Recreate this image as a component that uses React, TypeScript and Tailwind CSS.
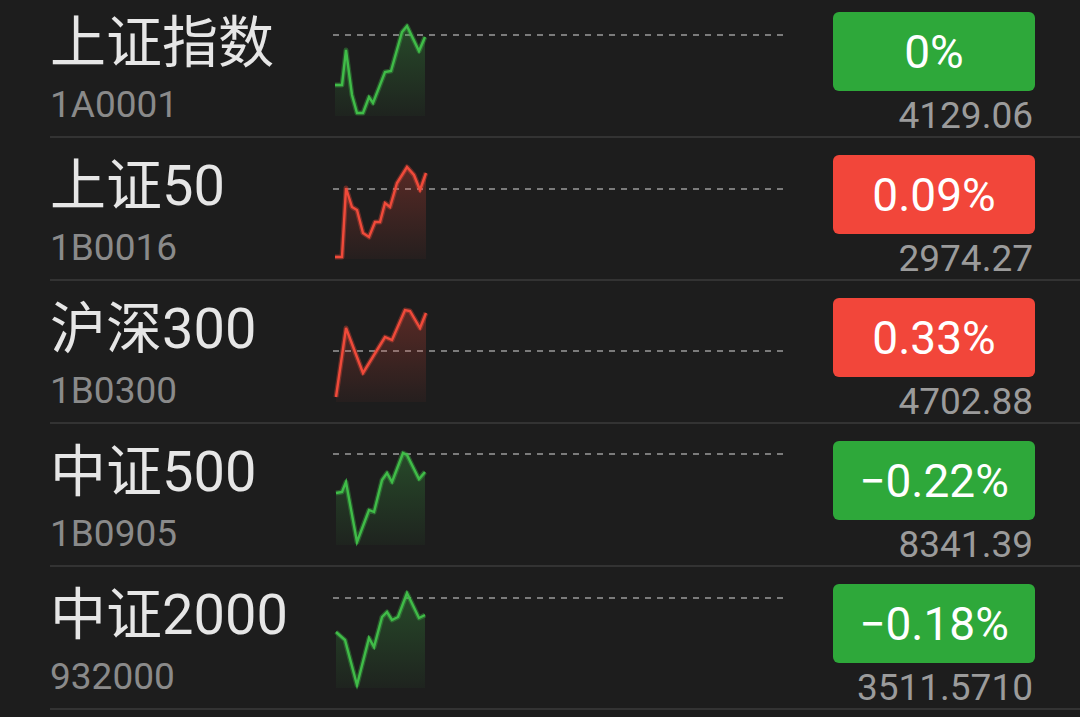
import React from "react";

type Row = {
  name: string;
  code: string;
  pct: string;
  price: string;
  up: boolean;
  pts: [number, number][];
  dash: number;
};

const rows: Row[] = [
  {
    name: "上证指数",
    code: "1A0001",
    pct: "0%",
    price: "4129.06",
    up: false,
    dash: 40,
    pts: [[5,90],[12,90],[16,55],[22,100],[27,118],[33,118],[39,102],[43,108],[55,77],[61,76],[72,37],[77,31],[89,56],[95,42]],
  },
  {
    name: "上证50",
    code: "1B0016",
    pct: "0.09%",
    price: "2974.27",
    up: true,
    dash: 51,
    pts: [[5,119],[12,119],[16,50],[22,69],[27,72],[33,95],[39,99],[45,84],[50,84],[55,65],[60,69],[67,45],[77,29],[84,37],[90,52],[96,35]],
  },
  {
    name: "沪深300",
    code: "1B0300",
    pct: "0.33%",
    price: "4702.88",
    up: true,
    dash: 70,
    pts: [[6,116],[16,47],[33,92],[55,56],[62,59],[75,29],[80,30],[90,47],[96,32]],
  },
  {
    name: "中证500",
    code: "1B0905",
    pct: "−0.22%",
    price: "8341.39",
    up: false,
    dash: 30,
    pts: [[6,69],[12,68],[16,58],[27,118],[39,86],[44,88],[52,56],[57,49],[62,58],[73,29],[77,31],[89,55],[95,48]],
  },
  {
    name: "中证2000",
    code: "932000",
    pct: "−0.18%",
    price: "3511.5710",
    up: false,
    dash: 31,
    pts: [[6,65],[15,73],[27,118],[39,71],[44,80],[52,50],[57,45],[62,53],[68,50],[77,26],[89,51],[95,48]],
  },
];

function Spark({ row, idx }: { row: Row; idx: number }) {
  const color = row.up ? "#f04a3a" : "#40bc48";
  const line = row.pts.map((p) => p.join(",")).join(" ");
  const first = row.pts[0];
  const last = row.pts[row.pts.length - 1];
  const area = `${first[0]},121 ${line} ${last[0]},121`;
  const gid = `g${idx}`;
  return (
    <svg width="460" height="141" viewBox="0 0 460 141" className="block shrink-0">
      <defs>
        <linearGradient id={gid} x1="0" y1="0" x2="0" y2="1">
          <stop offset="0" stopColor={color} stopOpacity="0.28" />
          <stop offset="1" stopColor={color} stopOpacity="0.04" />
        </linearGradient>
      </defs>
      <line x1="3" y1={row.dash} x2="458" y2={row.dash} stroke="#9a9a9a" strokeWidth="1.4" strokeDasharray="6 6" />
      <polygon points={area} fill={`url(#${gid})`} />
      <polyline points={line} fill="none" stroke={color} strokeOpacity="0.35" strokeWidth="5" strokeLinejoin="round" />
      <polyline points={line} fill="none" stroke={color} strokeWidth="2.4" strokeLinejoin="miter" />
    </svg>
  );
}

export default function App() {
  return (
    <div
      className="w-[1080px] h-[717px] overflow-hidden bg-[#1d1d1d]"
      style={{ fontFamily: "Roboto, 'Noto Sans CJK SC', sans-serif" }}
    >
      <div className="-mt-[5px]">
        {rows.map((r, i) => (
          <div key={i} className="ml-[50px] h-[143px] flex items-start border-b-2 border-[#333333]">
            <div className="w-[280px] shrink-0 pt-[20px]">
              <div className="text-[56px] leading-[56px] text-[#e6e6e6] whitespace-nowrap">{r.name}</div>
              <div className="mt-[15px] text-[37px] leading-[37px] text-[#8a8a8a]">{r.code}</div>
            </div>
            <Spark row={r} idx={i} />
            <div className="flex-1" />
            <div className="w-[202px] mr-[45px] pt-[17px] flex flex-col items-end">
              <div
                className={`w-[202px] h-[79px] rounded-[6px] flex items-center justify-center text-[46px] leading-none text-white ${
                  r.up ? "bg-[#f2463a]" : "bg-[#2ea83a]"
                }`}
              >
                {r.pct}
              </div>
              <div className="mt-[6px] mr-[2px] text-[37px] leading-[37px] text-[#9b9b9b]">{r.price}</div>
            </div>
          </div>
        ))}
      </div>
    </div>
  );
}
